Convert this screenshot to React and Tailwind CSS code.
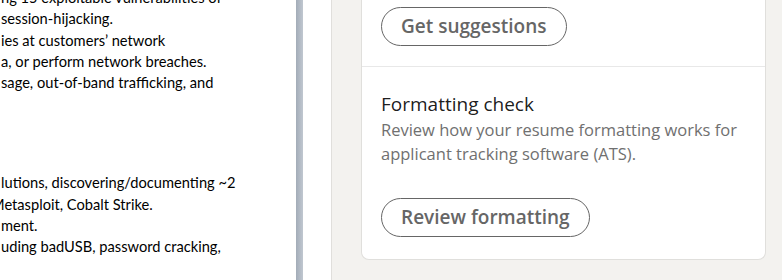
import React from "react";

const docTop = [
  "ng 15 exploitable vulnerabilities of",
  "session-hijacking.",
  "ies at customers\u2019 network",
  "a, or perform network breaches.",
  "sage, out-of-band trafficking, and",
];

const PillButton = ({ children }) => {
  return (
    <button className="h-[39px] rounded-full border border-[#666666] px-[19px] text-[19px] font-semibold text-[#666666]">
      {children}
    </button>
  );
};

const App = () => {
  return (
    <div className="flex h-[280px] w-[782px] overflow-hidden bg-[#f3f2ef]">
      {/* scrolled word document */}
      <div
        className="w-[296px] shrink-0 overflow-hidden bg-white text-[14.67px] leading-[21.3px] text-black"
        style={{ fontFamily: "Lato, 'Liberation Sans', sans-serif" }}
      >
        <div className="-mt-[13px] pl-[1px]">
          {docTop.map((line, i) => (
            <div key={i} className="whitespace-nowrap">
              {line}
            </div>
          ))}
        </div>
        <div className="mt-[79px] pl-[1px]">
          <div className="whitespace-nowrap">lutions, discovering/documenting ~2</div>
          <div className="-ml-[10px] whitespace-nowrap">Metasploit, Cobalt Strike.</div>
          <div className="whitespace-nowrap">ment.</div>
          <div className="whitespace-nowrap">uding badUSB, password cracking,</div>
        </div>
      </div>

      {/* scrollbar */}
      <div className="w-[7px] shrink-0 bg-gradient-to-r from-[#a3acb8] to-[#c0c7d0]"></div>
      <div className="w-[29px] shrink-0 border-r border-[#e0dfdc] bg-white"></div>

      {/* linkedin panel */}
      <div
        className="flex-1 pl-[29px] pr-[16px]"
        style={{ fontFamily: "'Open Sans', 'Noto Sans', sans-serif" }}
      >
        <div className="rounded-b-[8px] border-x border-b border-[#e0dfdc] bg-white">
          <div className="border-b border-[#e8e8e8] px-[19px] pt-[7px] pb-[20px]">
            <PillButton>Get suggestions</PillButton>
          </div>
          <div className="px-[19px] pt-[25px] pb-[22px]">
            <h3 className="text-[19px] leading-[24px] text-black/90">Formatting check</h3>
            <p className="mt-[2px] text-[16.5px] leading-[24px] text-[#707070]">
              Review how your resume formatting works for applicant tracking software (ATS).
            </p>
            <div className="mt-[32px]">
              <PillButton>Review formatting</PillButton>
            </div>
          </div>
        </div>
      </div>
    </div>
  );
};

export default App;
